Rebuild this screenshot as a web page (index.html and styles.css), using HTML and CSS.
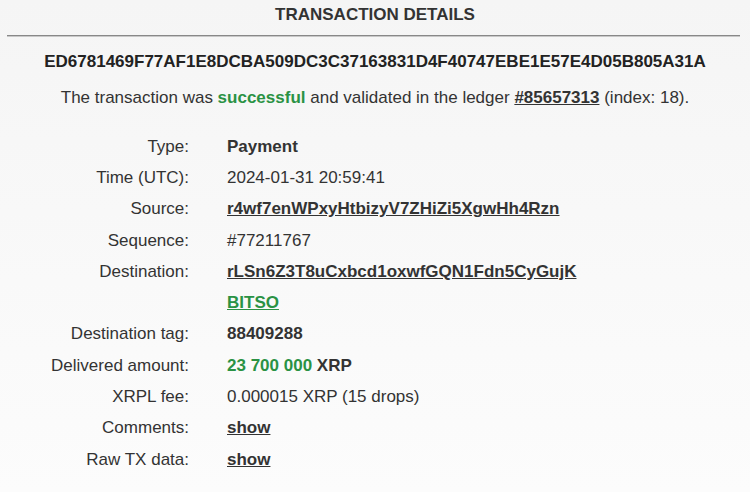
FILE: index.html
```html
<!DOCTYPE html>
<html>
<head>
<meta charset="utf-8">
<link rel="stylesheet" href="styles.css">
</head>
<body>
<div class="page">
  <h1 class="title">TRANSACTION DETAILS</h1>
  <div class="rule"></div>
  <div class="hash">ED6781469F77AF1E8DCBA509DC3C37163831D4F40747EBE1E57E4D05B805A31A</div>
  <p class="status">The transaction was <b class="green">successful</b> and validated in the ledger <a class="link" href="#">#85657313</a> (index: 18).</p>
  <div class="details">
    <div class="label">Type:</div><div class="value"><b>Payment</b></div>
    <div class="label">Time (UTC):</div><div class="value">2024-01-31 20:59:41</div>
    <div class="label">Source:</div><div class="value"><a class="link" href="#">r4wf7enWPxyHtbizyV7ZHiZi5XgwHh4Rzn</a></div>
    <div class="label">Sequence:</div><div class="value">#77211767</div>
    <div class="label">Destination:</div><div class="value"><a class="link" href="#">rLSn6Z3T8uCxbcd1oxwfGQN1Fdn5CyGujK</a></div>
    <div class="label"></div><div class="value"><a class="link green" href="#">BITSO</a></div>
    <div class="label">Destination tag:</div><div class="value"><b>88409288</b></div>
    <div class="label">Delivered amount:</div><div class="value"><b class="green">23 700 000</b> <b>XRP</b></div>
    <div class="label">XRPL fee:</div><div class="value">0.000015 XRP (15 drops)</div>
    <div class="label">Comments:</div><div class="value"><a class="link" href="#">show</a></div>
    <div class="label">Raw TX data:</div><div class="value"><a class="link" href="#">show</a></div>
  </div>
</div>
</body>
</html>
```
FILE: styles.css
```css
html, body {
  margin: 0;
  padding: 0;
}
body {
  background: linear-gradient(#f5f5f5, #fcfcfc);
  min-height: 492px;
  font-family: "Liberation Sans", Arial, sans-serif;
  color: #333;
  font-size: 17px;
}
.page {
  padding-top: 5px;
}
.title {
  margin: 0;
  font-size: 17px;
  font-weight: bold;
  text-align: center;
  line-height: 20px;
}
.rule {
  margin: 10px 10px 0 7px;
  height: 1px;
  background: #888;
  border-bottom: 1px solid #c8c8c8;
}
.hash {
  margin-top: 15px;
  text-align: center;
  font-weight: bold;
  font-size: 17px;
  line-height: 20px;
  color: #222;
}
.status {
  margin: 16px 0 0;
  text-align: center;
  line-height: 20px;
}
.green {
  color: #2a9244;
}
.link {
  color: #333;
  font-weight: bold;
  text-decoration: underline;
}
.link.green {
  color: #2a9244;
}
.details {
  margin-top: 23px;
  display: grid;
  grid-template-columns: 189px 1fr;
  grid-auto-rows: 31.3px;
  column-gap: 38px;
  align-items: center;
}
.label {
  text-align: right;
}
```
